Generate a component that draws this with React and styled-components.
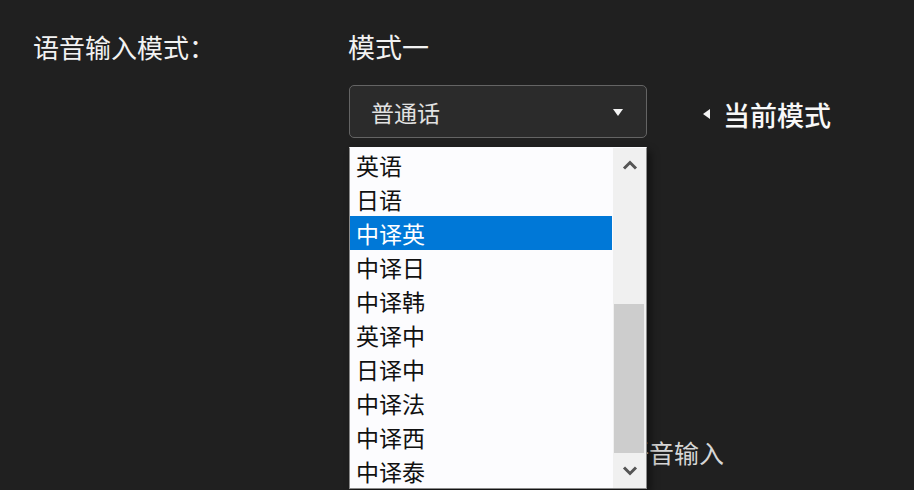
import React from 'react';
import styled, { createGlobalStyle } from 'styled-components';

const GlobalStyle = createGlobalStyle`
  html, body {
    margin: 0;
    padding: 0;
    background: #202020;
    font-family: "Microsoft YaHei", "Noto Sans CJK SC", "Noto Sans", sans-serif;
  }
  #root {
    height: 490px;
    overflow: hidden;
  }
`;

const Page = styled.div`
  display: grid;
  grid-template-columns: 315px 1fr;
  padding: 32px 0 0 33px;
  height: 490px;
  box-sizing: border-box;
  background: #202020;
  color: #f2f2f2;
`;

const Label = styled.div`
  font-size: 26px;
  line-height: 30px;
  color: #f2f2f2;
`;

const Content = styled.div`
  display: flex;
  flex-direction: column;
`;

const Title = styled.div`
  font-size: 27px;
  line-height: 30px;
  color: #f2f2f2;
`;

const SelectRow = styled.div`
  display: flex;
  align-items: center;
  margin-top: 23px;
`;

const SelectWrap = styled.div`
  position: relative;
  margin-left: 1px;
`;

const SelectBox = styled.div`
  width: 298px;
  height: 53px;
  box-sizing: border-box;
  display: flex;
  align-items: center;
  justify-content: space-between;
  padding: 0 23px 0 21px;
  border: 1px solid #646464;
  border-radius: 5px;
  background: #2b2b2b;
  color: #e2e2e2;
  font-size: 23px;
`;

const Caret = styled.span`
  width: 0;
  height: 0;
  border-left: 5px solid transparent;
  border-right: 5px solid transparent;
  border-top: 7px solid #f4f4f4;
  margin-top: 1px;
`;

const Current = styled.div`
  display: flex;
  align-items: center;
  gap: 13px;
  margin-left: 56px;
  margin-top: 5px;
  font-size: 27px;
  font-weight: 500;
  color: #f8f8f8;
`;

const Pointer = styled.span`
  width: 0;
  height: 0;
  border-top: 5px solid transparent;
  border-bottom: 5px solid transparent;
  border-right: 7px solid #f4f4f4;
`;

const Dropdown = styled.div`
  position: absolute;
  top: 62px;
  left: 0;
  width: 298px;
  height: 342px;
  box-sizing: border-box;
  display: flex;
  background: #fcfcfe;
  border: 1px solid #8a8a8a;
  border-top-color: #fcfcfe;
  box-shadow: 4px 4px 8px rgba(0, 0, 0, 0.45);
  z-index: 2;
`;

const Options = styled.ul`
  flex: 1;
  margin: 0;
  padding: 0;
  list-style: none;
  overflow: hidden;
`;

const Option = styled.li`
  height: 34px;
  display: flex;
  align-items: center;
  padding-left: 6px;
  font-size: 23px;
  color: ${(p) => (p.$active ? '#ffffff' : '#111111')};
  background: ${(p) => (p.$active ? '#0078d7' : 'transparent')};
`;

const Scrollbar = styled.div`
  width: 33px;
  margin-left: 1px;
  display: flex;
  flex-direction: column;
  background: #f0f0f0;
`;

const ArrowBtn = styled.div`
  height: 34px;
  display: flex;
  align-items: center;
  justify-content: center;
`;

const Track = styled.div`
  flex: 1;
  display: flex;
  flex-direction: column;
  padding: 0 2px 0 1px;
`;

const Thumb = styled.div`
  margin-top: 122px;
  height: 149px;
  background: #cdcdcd;
`;

const Hidden = styled.div`
  margin-top: 299px;
  padding-left: 276px;
  font-size: 25px;
  line-height: 30px;
  color: #d6d6d6;
`;

const Chevron = ({ up }) => (
  <svg width="16" height="10" viewBox="0 0 16 10">
    <path
      d={up ? 'M2 8.5 L8 2.5 L14 8.5' : 'M2 1.5 L8 7.5 L14 1.5'}
      fill="none"
      stroke="#555555"
      strokeWidth="3"
    />
  </svg>
);

const options = ['英语', '日语', '中译英', '中译日', '中译韩', '英译中', '日译中', '中译法', '中译西', '中译泰'];

export default function App() {
  return (
    <>
      <GlobalStyle />
      <Page>
        <Label>语音输入模式：</Label>
        <Content>
          <Title>模式一</Title>
          <SelectRow>
            <SelectWrap>
              <SelectBox>
                <span>普通话</span>
                <Caret />
              </SelectBox>
              <Dropdown>
                <Options>
                  {options.map((o) => (
                    <Option key={o} $active={o === '中译英'}>{o}</Option>
                  ))}
                </Options>
                <Scrollbar>
                  <ArrowBtn><Chevron up /></ArrowBtn>
                  <Track><Thumb /></Track>
                  <ArrowBtn><Chevron /></ArrowBtn>
                </Scrollbar>
              </Dropdown>
            </SelectWrap>
            <Current>
              <Pointer />
              <span>当前模式</span>
            </Current>
          </SelectRow>
          <Hidden>语音输入</Hidden>
        </Content>
      </Page>
    </>
  );
}
